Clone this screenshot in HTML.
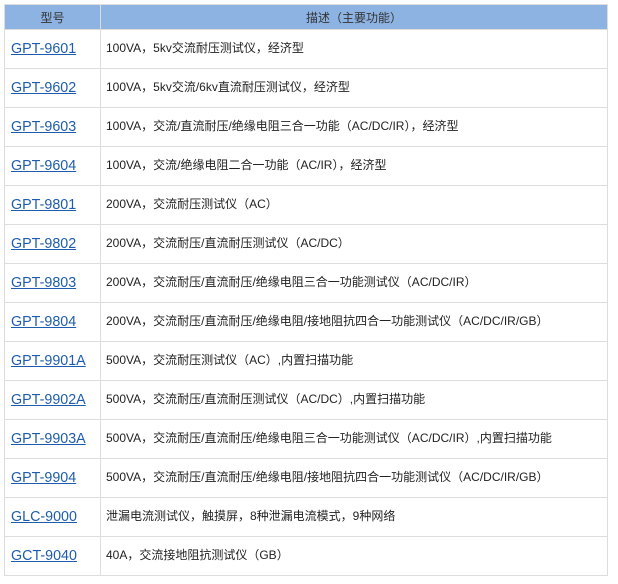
<!DOCTYPE html>
<html><head><meta charset="utf-8"><style>
body{margin:0;background:#fff;font-family:"Liberation Sans","Noto Sans CJK SC",sans-serif;}
table{position:absolute;left:4px;top:4px;border-collapse:collapse;width:604px;}
td,th{border:1px solid #ddd;padding:0 0 0 5px;text-align:left;vertical-align:middle;}
th{background:#8db3e2;height:24px;font-weight:normal;font-size:12px;color:#333;text-align:center;padding:0;}
td{height:35px;padding-bottom:3px;font-size:12px;line-height:16px;color:#222;}
td.m{width:89px;font-size:14.3px;line-height:16px;padding-left:6px;}
td.m a{color:#1d5cae;text-decoration:underline;position:relative;top:1px;}
</style></head><body>
<table>
<tr><th style="width:94px">型号</th><th>描述（主要功能）</th></tr>
<tr><td class="m"><a>GPT-9601</a></td><td>100VA，5kv交流耐压测试仪，经济型</td></tr>
<tr><td class="m"><a>GPT-9602</a></td><td>100VA，5kv交流/6kv直流耐压测试仪，经济型</td></tr>
<tr><td class="m"><a>GPT-9603</a></td><td>100VA，交流/直流耐压/绝缘电阻三合一功能（AC/DC/IR），经济型</td></tr>
<tr><td class="m"><a>GPT-9604</a></td><td>100VA，交流/绝缘电阻二合一功能（AC/IR），经济型</td></tr>
<tr><td class="m"><a>GPT-9801</a></td><td>200VA，交流耐压测试仪（AC）</td></tr>
<tr><td class="m"><a>GPT-9802</a></td><td>200VA，交流耐压/直流耐压测试仪（AC/DC）</td></tr>
<tr><td class="m"><a>GPT-9803</a></td><td>200VA，交流耐压/直流耐压/绝缘电阻三合一功能测试仪（AC/DC/IR）</td></tr>
<tr><td class="m"><a>GPT-9804</a></td><td>200VA，交流耐压/直流耐压/绝缘电阻/接地阻抗四合一功能测试仪（AC/DC/IR/GB）</td></tr>
<tr><td class="m"><a>GPT-9901A</a></td><td>500VA，交流耐压测试仪（AC）,内置扫描功能</td></tr>
<tr><td class="m"><a>GPT-9902A</a></td><td>500VA，交流耐压/直流耐压测试仪（AC/DC）,内置扫描功能</td></tr>
<tr><td class="m"><a>GPT-9903A</a></td><td>500VA，交流耐压/直流耐压/绝缘电阻三合一功能测试仪（AC/DC/IR）,内置扫描功能</td></tr>
<tr><td class="m"><a>GPT-9904</a></td><td>500VA，交流耐压/直流耐压/绝缘电阻/接地阻抗四合一功能测试仪（AC/DC/IR/GB）</td></tr>
<tr><td class="m"><a>GLC-9000</a></td><td>泄漏电流测试仪，触摸屏，8种泄漏电流模式，9种网络</td></tr>
<tr><td class="m"><a>GCT-9040</a></td><td>40A，交流接地阻抗测试仪（GB）</td></tr>
</table>
</body></html>
